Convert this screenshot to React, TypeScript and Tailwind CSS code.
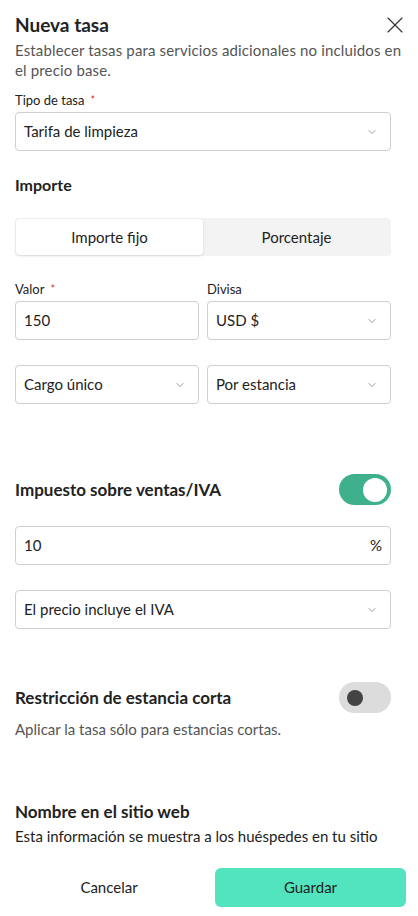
import { X, ChevronDown } from "lucide-react";

const Label = ({ text, required }: { text: string; required?: boolean }) => (
  <div className="text-[13px] text-[#222] mb-[3px] leading-[18px]">
    {text}
    {required && <span className="text-[#d93030] ml-[6px] text-[11px] align-top">*</span>}
  </div>
);

const Select = ({ value }: { value: string }) => (
  <div className="h-[39px] border border-[#cfcfcf] rounded-[4px] flex items-center justify-between pl-[8px] pr-[12px] text-[15px] text-[#222] bg-white">
    <span>{value}</span>
    <ChevronDown className="w-[12px] h-[12px] text-[#777]" strokeWidth={1.5} />
  </div>
);

const Toggle = ({ on }: { on: boolean }) =>
  on ? (
    <div className="w-[52px] h-[31px] rounded-full bg-[#3fb08c] flex items-center justify-end pr-[4px]">
      <div className="w-[24px] h-[24px] rounded-full bg-white" />
    </div>
  ) : (
    <div className="w-[52px] h-[31px] rounded-full bg-[#dcdcdc] flex items-center pl-[8px]">
      <div className="w-[16px] h-[16px] rounded-full bg-[#444]" />
    </div>
  );

export default function App() {
  return (
    <div className="h-[916px] w-[418px] flex flex-col bg-white font-['Lato',sans-serif] text-[#222]">
      <div className="flex-1 overflow-hidden pl-[15px] pt-[12px]">
        <div className="pr-[15px]">
          <div className="flex items-center justify-between">
            <h1 className="text-[19px] font-bold leading-[26px]">Nueva tasa</h1>
            <X className="w-[28px] h-[28px] text-[#333] mr-[-6px] my-[-1px]" strokeWidth={1} />
          </div>
          <p className="text-[15px] leading-[20px] text-[#555] mt-[2px] tracking-[0.15px]">
            Establecer tasas para servicios adicionales no incluidos en el precio base.
          </p>
        </div>

        <div className="pr-[27px]">
          <div className="mt-[11px]">
            <Label text="Tipo de tasa" required />
            <Select value="Tarifa de limpieza" />
          </div>

          <h2 className="text-[16px] font-bold mt-[23px] leading-[22px]">Importe</h2>

          <div className="mt-[22px] h-[38px] bg-[#f3f3f3] rounded-[4px] flex p-[1px]">
            <div className="w-[187px] bg-white rounded-[4px] shadow-[0_1px_3px_rgba(0,0,0,0.12)] flex items-center justify-center text-[15px]">
              Importe fijo
            </div>
            <div className="flex-1 flex items-center justify-center text-[15px]">Porcentaje</div>
          </div>

          <div className="mt-[24px] grid grid-cols-2 gap-[8px]">
            <div>
              <Label text="Valor" required />
              <div className="h-[39px] border border-[#cfcfcf] rounded-[4px] flex items-center pl-[8px] text-[15px]">150</div>
            </div>
            <div>
              <Label text="Divisa" />
              <Select value="USD $" />
            </div>
          </div>

          <div className="mt-[25px] grid grid-cols-2 gap-[8px]">
            <Select value="Cargo único" />
            <Select value="Por estancia" />
          </div>

          <div className="mt-[70px] flex items-center justify-between">
            <h2 className="text-[17px] font-bold">Impuesto sobre ventas/IVA</h2>
            <Toggle on />
          </div>

          <div className="mt-[21px] h-[39px] border border-[#cfcfcf] rounded-[4px] flex items-center justify-between pl-[8px] pr-[8px] text-[15px]">
            <span>10</span>
            <span>%</span>
          </div>

          <div className="mt-[25px]">
            <Select value="El precio incluye el IVA" />
          </div>

          <div className="mt-[53px] flex items-center justify-between">
            <h2 className="text-[17px] font-bold">Restricción de estancia corta</h2>
            <Toggle on={false} />
          </div>
          <p className="text-[15px] text-[#555] leading-[20px] mt-[6px]">Aplicar la tasa sólo para estancias cortas.</p>

          <h2 className="text-[17px] font-bold mt-[62px] leading-[22px]">Nombre en el sitio web</h2>
          <p className="text-[15px] leading-[20px] mt-[3px]">
            Esta información se muestra a los huéspedes en tu sitio web, como el nombre de la tasa.
          </p>
        </div>
      </div>

      <div className="h-[65px] shrink-0 flex items-start pt-[17px] pl-[15px] pr-[12px] gap-[12px]">
        <button className="flex-1 h-[39px] text-[15px] text-[#222]">Cancelar</button>
        <button className="w-[191px] h-[39px] rounded-[6px] bg-[#52e3bf] text-[15px] text-[#222]">Guardar</button>
      </div>
    </div>
  );
}
